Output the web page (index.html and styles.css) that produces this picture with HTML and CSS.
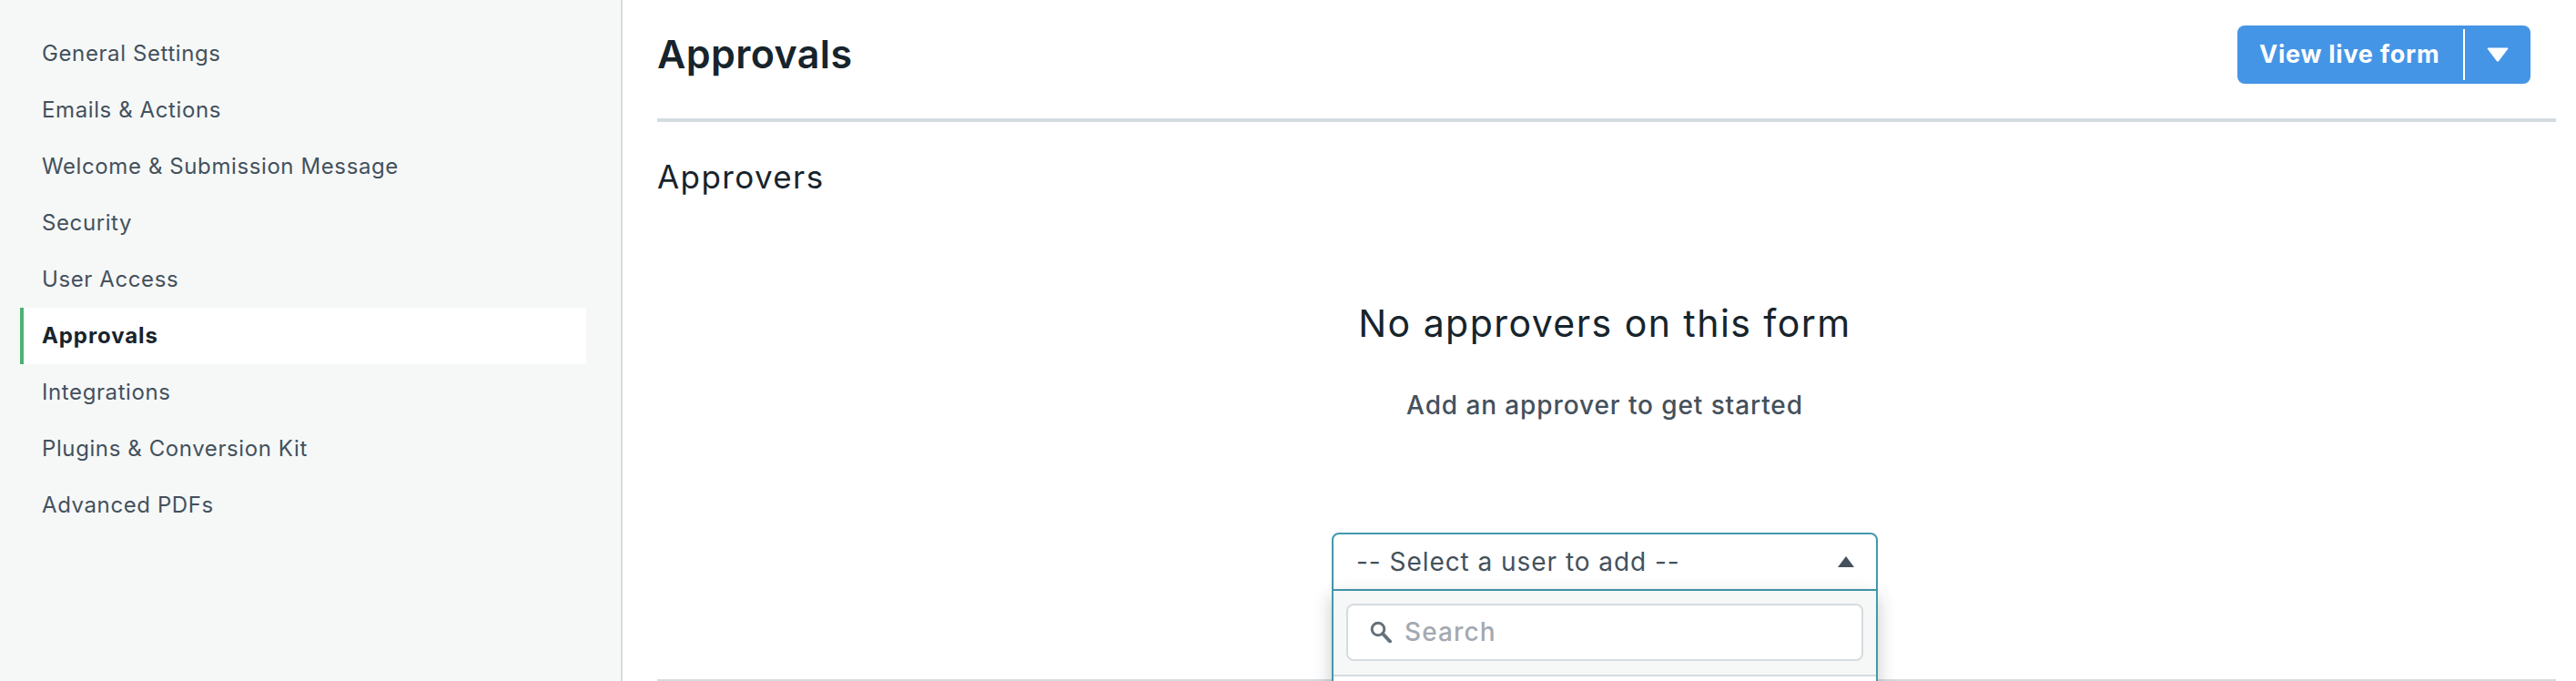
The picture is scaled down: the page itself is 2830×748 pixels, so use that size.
FILE: index.html
```html
<!DOCTYPE html>
<html lang="en">
<head>
<meta charset="utf-8">
<title>Approvals</title>
<link rel="stylesheet" href="styles.css">
</head>
<body>
<div class="page">
  <aside class="sidebar">
    <nav class="nav">
      <a class="nav-item">General Settings</a>
      <a class="nav-item">Emails &amp; Actions</a>
      <a class="nav-item">Welcome &amp; Submission Message</a>
      <a class="nav-item">Security</a>
      <a class="nav-item">User Access</a>
      <a class="nav-item nav-item-active">Approvals</a>
      <a class="nav-item">Integrations</a>
      <a class="nav-item">Plugins &amp; Conversion Kit</a>
      <a class="nav-item">Advanced PDFs</a>
    </nav>
  </aside>
  <main class="main">
    <header class="header">
      <h1 class="title">Approvals</h1>
      <div class="live-button">
        <span class="live-label">View live form</span>
        <span class="live-caret"><svg width="24" height="16" viewBox="0 0 24 16"><path d="M1.5 0.5H22.5Q24 0.5 23 2L13.2 15Q12 16.2 10.8 15L1 2Q0 0.5 1.5 0.5Z" fill="#fff"/></svg></span>
      </div>
    </header>
    <section class="section">
      <h2 class="subtitle">Approvers</h2>
      <div class="empty">
        <h3 class="empty-title">No approvers on this form</h3>
        <p class="empty-text">Add an approver to get started</p>
        <div class="select">
          <div class="select-box">
            <span class="select-label">-- Select a user to add --</span>
            <svg class="select-arrow" width="18" height="12" viewBox="0 0 18 12"><path d="M9 0L18 12H0Z" fill="#44515c"/></svg>
          </div>
          <div class="dropdown">
            <div class="search">
              <svg class="search-icon" width="24" height="24" viewBox="0 0 24 24"><circle cx="9" cy="9" r="6.8" fill="none" stroke="#66717a" stroke-width="3"/><path d="M14 14L22 22.5" stroke="#66717a" stroke-width="4" stroke-linecap="round"/></svg>
              <span class="search-text">Search</span>
            </div>
            <div class="dropdown-list"></div>
          </div>
        </div>
      </div>
    </section>
  </main>
</div>
</body>
</html>
```

FILE: styles.css
```css
* { box-sizing: border-box; }
html, body { margin: 0; padding: 0; height: 748px; overflow: hidden; background: #fff; }
body { font-family: Inter, "Open Sans", sans-serif; color: #17242c; }
.page { display: flex; width: 2830px; height: 748px; overflow: hidden; }

.sidebar { flex: 0 0 684px; height: 748px; background: #f6f8f8; border-right: 2px solid #d5dce0; padding-top: 28px; }
.nav { display: flex; flex-direction: column; margin-left: 22px; width: 622px; }
.nav-item { display: flex; align-items: center; height: 62px; padding: 0 0 2px 20px; border-left: 4px solid transparent; font-size: 24px; color: #44515c; letter-spacing: 0.6px; }
.nav-item-active { background: #fff; border-left-color: #4cb273; font-weight: 700; color: #17242c; letter-spacing: 0.9px; }

.main { flex: 1; min-width: 0; display: flex; flex-direction: column; padding: 0 22px 0 38px; height: 748px; }
.header { flex: 0 0 134px; display: flex; align-items: flex-start; justify-content: space-between; border-bottom: 4px solid #d5dce0; }
.title { margin: 33px 0 0; font-size: 43px; line-height: 52px; font-weight: 600; color: #17242c; letter-spacing: 0.4px; }
.live-button { display: flex; align-items: center; height: 64px; margin: 28px 28px 0 0; background: #4595e6; border-radius: 8px; color: #fff; }
.live-label { width: 250px; height: 56px; padding-left: 24px; border-right: 2px solid #fff; font-size: 27px; line-height: 56px; font-weight: 700; letter-spacing: 0.75px; white-space: nowrap; }
.live-caret { display: flex; width: 72px; justify-content: center; }

.section { flex: 0 0 614px; border-bottom: 2px solid #d5dce0; padding-top: 40px; }
.subtitle { margin: 0; font-size: 35px; line-height: 41px; font-weight: 400; color: #17242c; letter-spacing: 1.4px; }
.empty { display: flex; flex-direction: column; align-items: center; padding-right: 4px; }
.empty-title { margin: 112px 0 0; font-size: 41px; line-height: 56px; font-weight: 400; color: #17242c; letter-spacing: 1.45px; }
.empty-text { margin: 44px 0 0; font-size: 28px; line-height: 36px; font-weight: 500; color: #44515c; letter-spacing: 0.9px; }
.select { position: relative; width: 600px; margin-top: 122px; }
.select-box { display: flex; align-items: center; justify-content: space-between; height: 64px; padding: 0 24px 0 25px; background: #fff; border: 2px solid #4399ac; border-radius: 8px 8px 0 0; }
.select-label { font-size: 28px; color: #44515c; letter-spacing: 0.95px; }
.dropdown { position: absolute; top: 64px; left: 0; right: 0; height: 200px; background: #f6f8f8; border: 2px solid #4399ac; border-top: 0; box-shadow: 0 6px 18px rgba(23, 36, 44, 0.25); }
.search { display: flex; align-items: center; height: 63px; margin: 14px 14px 0 14px; padding: 0 0 2px 24px; background: #fff; border: 2px solid #d5dce0; border-radius: 8px; }
.search-icon { margin-right: 14px; }
.search-text { font-size: 28px; font-weight: 500; color: #a3a9b1; letter-spacing: 1.1px; }
.dropdown-list { height: 120px; margin-top: 15px; background: #fff; border-top: 2px solid #d5dce0; }
```
